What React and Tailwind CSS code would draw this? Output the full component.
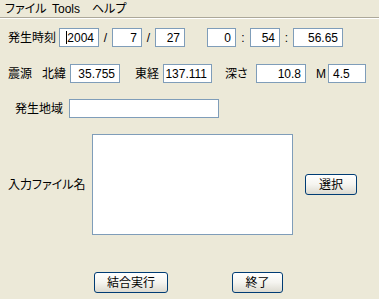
import React from "react";

function Box({ w, children, left, caret }) {
  return (
    <div
      className={`shrink-0 h-[19px] border border-[#7f9db9] bg-white flex items-center px-[4px] ${
        left ? "justify-start" : "justify-end"
      }`}
      style={{ width: w }}
    >
      {caret && <span className="w-px h-[13px] bg-black" />}
      <span className="leading-none">{children}</span>
    </div>
  );
}

function XpButton({ w, children }) {
  return (
    <button
      className="shrink-0 h-[21px] rounded-[3px] border border-[#003c74] bg-gradient-to-b from-white via-[#f5f4ef] to-[#dcdad0] flex items-center justify-center leading-none"
      style={{ width: w }}
    >
      {children}
    </button>
  );
}

export default function App() {
  return (
    <div className="w-[379px] h-[299px] overflow-hidden bg-[#ece9d8] text-[12px] text-black font-['Liberation_Sans','Noto_Sans_CJK_JP',sans-serif] [font-feature-settings:'palt']">
      {/* menu bar */}
      <div className="h-[18px] flex items-center border-b border-[#aca899] shadow-[0_1px_0_#fff]">
        <span className="pl-[5px] w-[52px] shrink-0">ファイル</span>
        <span className="w-[40px] shrink-0">Tools</span>
        <span>ヘルプ</span>
      </div>

      {/* 発生時刻 */}
      <div className="mt-[10px] flex items-center pl-[8px]">
        <span className="w-[51px] shrink-0">発生時刻</span>
        <Box w="40px" caret>2004</Box>
        <span className="w-[13px] shrink-0 text-center">/</span>
        <Box w="30px">7</Box>
        <span className="w-[13px] shrink-0 text-center">/</span>
        <Box w="30px">27</Box>
        <span className="w-[22px] shrink-0" />
        <Box w="29px">0</Box>
        <span className="w-[14px] shrink-0 text-center">:</span>
        <Box w="30px">54</Box>
        <span className="w-[13px] shrink-0 text-center">:</span>
        <Box w="50px">56.65</Box>
      </div>

      {/* 震源 */}
      <div className="mt-[17px] flex items-center pl-[8px]">
        <span className="w-[34px] shrink-0">震源</span>
        <span className="w-[28px] shrink-0">北緯</span>
        <Box w="50px">35.755</Box>
        <span className="ml-[15px] w-[28px] shrink-0">東経</span>
        <Box w="49px">137.111</Box>
        <span className="ml-[13px] w-[31px] shrink-0">深さ</span>
        <Box w="50px">10.8</Box>
        <span className="ml-[10px] w-[12px] shrink-0">M</span>
        <Box w="38px" left>4.5</Box>
      </div>

      {/* 発生地域 */}
      <div className="mt-[16px] flex items-center pl-[15px]">
        <span className="w-[54px] shrink-0">発生地域</span>
        <Box w="150px" />
      </div>

      {/* 入力ファイル名 */}
      <div className="mt-[16px] flex items-center pl-[8px]">
        <span className="w-[84px] shrink-0">入力ファイル名</span>
        <div className="w-[201px] h-[101px] shrink-0 border border-[#7f9db9] bg-white" />
        <div className="ml-[12px]">
          <XpButton w="52px">選択</XpButton>
        </div>
      </div>

      {/* buttons */}
      <div className="mt-[37px] flex items-center pl-[94px]">
        <XpButton w="74px">結合実行</XpButton>
        <div className="ml-[64px]">
          <XpButton w="51px">終了</XpButton>
        </div>
      </div>
    </div>
  );
}
